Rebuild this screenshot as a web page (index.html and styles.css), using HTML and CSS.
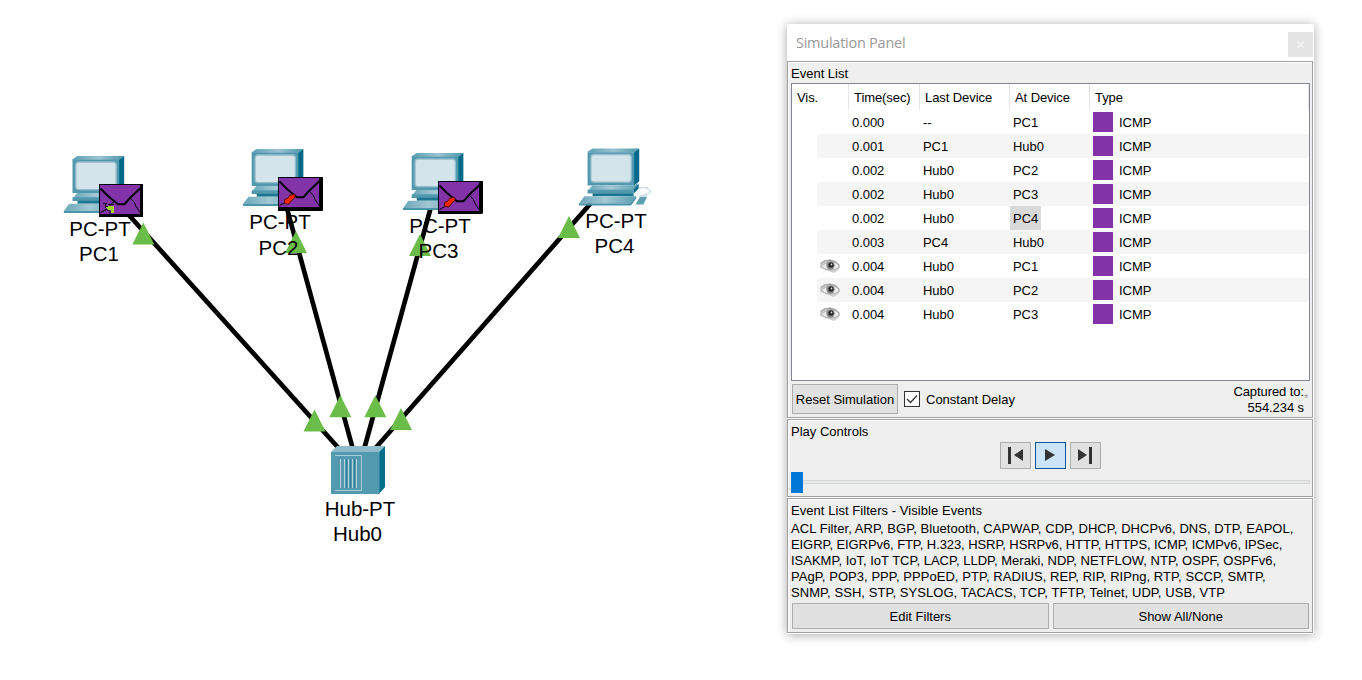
FILE: index.html
```html
<!DOCTYPE html>
<html lang="en">
<head>
<meta charset="utf-8">
<title>Simulation Panel</title>
<link rel="stylesheet" href="styles.css">
</head>
<body>
<main class="app">
<svg class="canvas" width="780" height="680" viewBox="0 0 780 680">
  <defs>
    <linearGradient id="lid" x1="0" x2="1"><stop offset="0" stop-color="#5c9fb3"/><stop offset=".5" stop-color="#9cc3d0"/><stop offset="1" stop-color="#4f97ac"/></linearGradient>
    <linearGradient id="deck" x1="0" x2="1"><stop offset="0" stop-color="#6aa7b9"/><stop offset=".45" stop-color="#a3c8d4"/><stop offset="1" stop-color="#5b9fb3"/></linearGradient>
    <g id="pc" transform="scale(.3333)">
      <path d="M0 10L15 0H155L140 12H0Z" fill="url(#lid)"/>
      <path d="M139 12L155 0V98L139 112Z" fill="#00698a"/>
      <path d="M0 11H140V111H0Z" fill="#5299b0"/>
      <rect x="10" y="18" width="121" height="83" rx="9" fill="#d3e4eb" stroke="#94bccb" stroke-width="4"/>
      <path d="M14 111H140L150 104V114L138 126H2Z" fill="url(#deck)"/>
      <path d="M138 124L153 106V120L138 136Z" fill="#00698a"/>
      <path d="M0 124H138V135H0Z" fill="#5299b0"/>
      <path d="M15 134H138V143H15Z" fill="#1d7691"/>
      <path d="M-10 143H146L126 166H-26Z" fill="url(#deck)"/>
      <path d="M-26 165H126L146 143V150L130 171H-26Z" fill="#4b94aa"/>
    </g>
    <g id="mail" shape-rendering="crispEdges">
      <path d="M0 0H44V33H0Z" fill="#000"/>
      <path d="M1 1H41V30H1Z" fill="#8133a7"/>
    </g>
    <g id="folds">
      <path d="M1.500 4.500L9 12l6 5 4 3.200h6.500L31 14l10.500-10" fill="none" stroke="#000" stroke-width="1.900"/>
      <path d="M1.500 28.500L8 25l7-8M31 14l4.500 4.500 1.500 4 4 6" fill="none" stroke="#000" stroke-width="1"/>
    </g>
    <g id="red">
      <path d="M6.500 22.500l3-1 2.500-3.500 5-.5v3l-3 2.500-3 4-4.500-.5Z" fill="#fb2600" stroke="#5b0909" stroke-width="1"/>
    </g>
    <path id="up" d="M0 0L11 22H-11Z" fill="#6bbd49"/>
  </defs>

  <g class="link">
    <path d="M127 213L343 453"/>
    <path d="M286 205L354 453"/>
    <path d="M431.500 205L363 453"/>
    <path d="M591 203L372 452"/>
  </g>
  <use href="#up" x="143.300" y="222.500"/>
  <use href="#up" x="296" y="231"/>
  <use href="#up" x="420" y="234"/>
  <use href="#up" x="569" y="216"/>
  <use href="#up" x="314.500" y="409.500"/>
  <use href="#up" x="340.300" y="395.300"/>
  <use href="#up" x="375.300" y="395.300"/>
  <use href="#up" x="401" y="408"/>

  <use href="#pc" x="72.500" y="156"/>
  <use href="#pc" x="251.700" y="149"/>
  <use href="#pc" x="411.700" y="153"/>
  <use href="#pc" x="587.600" y="148.500"/>
  <path d="M638 188.500c2-1 11-2 12 2s-5 4-11 6" fill="none" stroke="#9dc4d0" stroke-width="1" stroke-dasharray="5 1"/>
  <path d="M640 197l7-.5-3.500 8h-8Z" fill="#5d9fb3"/>

  <g class="hub">
    <path d="M331 452L337 446H385L379 452Z" fill="#8fbbca"/>
    <path d="M379 452L385 446V487L379 494Z" fill="#00708a"/>
    <path d="M331 452H379.500V494H331Z" fill="#5399b0"/>
    <path d="M335 455.500H361.500V490.500H335" fill="none" stroke="#a9cdd8"/>
    <path d="M340.500 459V488M344.500 459V488M348.500 459V488M352.500 459V488M356.500 459V488" stroke="#b5d3dd"/>
    <path d="M346.500 459V488M350.500 459V488M354.500 459V488" stroke="#2f819b"/>
  </g>

  <g class="label">
    <text x="100" y="236">PC-PT</text><text x="99" y="261">PC1</text>
    <text x="280" y="229">PC-PT</text><text x="278.500" y="255">PC2</text>
    <text x="440" y="233">PC-PT</text><text x="438.500" y="258">PC3</text>
    <text x="616" y="228">PC-PT</text><text x="614.500" y="253">PC4</text>
    <text x="360" y="516">Hub-PT</text><text x="357.500" y="541">Hub0</text>
  </g>

  <use href="#mail" x="99" y="184"/><use href="#folds" x="99" y="184"/>
  <path d="M106 206h8v7h-3v-3h-3l-2-2Z" fill="#a8d52b" shape-rendering="crispEdges"/>
  <path d="M103 203.500h4M105 206.500h3M108 204.500h6M105.500 203v5M103 211.500l3-2M107 210l3 1v4" fill="none" stroke="#111"/>
  <use href="#mail" x="278" y="177"/><path d="M322.500 177V210.500H278" fill="none" stroke="#000"/><use href="#folds" x="278" y="177"/><use href="#red" x="278" y="177"/>
  <use href="#mail" x="438" y="181"/><path d="M482.500 181V213.500" stroke="#000"/><use href="#folds" x="438" y="181"/><use href="#red" x="438" y="180"/>
</svg>

<section class="panel">
  <header class="title"><span class="title-text">Simulation Panel</span><span class="close"><svg width="9" height="9"><path d="M1.500 1.500l6 6M7.500 1.500l-6 6" stroke="#f4f4f4" stroke-width="1.500"/></svg></span></header>

  <div class="group events">
    <div class="caption">Event List</div>
    <div class="table">
      <div class="row head"><span>Vis.</span><span>Time(sec)</span><span>Last Device</span><span>At Device</span><span>Type</span></div>
      <div class="row"><i></i><span>0.000</span><span>--</span><span>PC1</span><b></b><span>ICMP</span></div>
      <div class="row alt"><i></i><span>0.001</span><span>PC1</span><span>Hub0</span><b></b><span>ICMP</span></div>
      <div class="row"><i></i><span>0.002</span><span>Hub0</span><span>PC2</span><b></b><span>ICMP</span></div>
      <div class="row alt"><i></i><span>0.002</span><span>Hub0</span><span>PC3</span><b></b><span>ICMP</span></div>
      <div class="row"><i></i><span>0.002</span><span>Hub0</span><em>PC4</em><b></b><span>ICMP</span></div>
      <div class="row alt"><i></i><span>0.003</span><span>PC4</span><span>Hub0</span><b></b><span>ICMP</span></div>
      <div class="row"><i><svg width="20" height="14"><use href="#eye"/></svg></i><span>0.004</span><span>Hub0</span><span>PC1</span><b></b><span>ICMP</span></div>
      <div class="row alt"><i><svg width="20" height="14"><use href="#eye"/></svg></i><span>0.004</span><span>Hub0</span><span>PC2</span><b></b><span>ICMP</span></div>
      <div class="row"><i><svg width="20" height="14"><g id="eye">
        <path d="M0 4L4 1 10 0 15 1.500 20 6V9L17 12 14 14 8 12 3 10 0 9Z" fill="#cfcfcf"/>
        <path d="M1 7Q6 3 12 3T19 8Q16 11.500 10 11T1 7Z" fill="#eee" stroke="#a5a5a5" stroke-width=".8"/>
        <path d="M1 4.500Q5 1 11 1.500T19 6" fill="none" stroke="#999" stroke-width=".9"/>
        <circle cx="10.500" cy="6.500" r="4.200" fill="#888"/><circle cx="11" cy="6" r="2.600" fill="#222"/><circle cx="11.500" cy="5.500" r=".9" fill="#ddd"/>
        </g></svg></i><span>0.004</span><span>Hub0</span><span>PC3</span><b></b><span>ICMP</span></div>
    </div>
    <div class="below">
      <button class="btn reset">Reset Simulation</button>
      <span class="check"><svg width="14" height="14"><path d="M2 7l3.500 3.500L12 3.500" fill="none" stroke="#333" stroke-width="1.300"/></svg></span>
      <span class="delay">Constant Delay</span>
      <span class="captured">Captured to:<br>554.234 s</span><span class="star">*</span>
    </div>
  </div>

  <div class="group play">
    <div class="caption">Play Controls</div>
    <div class="controls">
      <button class="btn"><svg width="29" height="25"><path d="M7 4h3v17H7zM22 6v12l-9-6z" fill="#333"/></svg></button>
      <button class="btn on"><svg width="29" height="25"><path d="M9 6v12l10-6z" fill="#333"/></svg></button>
      <button class="btn"><svg width="29" height="25"><path d="M7 6v12l9-6zM18 4h3v17h-3z" fill="#333"/></svg></button>
    </div>
    <div class="slider"><span class="thumb"></span><span class="track"></span></div>
  </div>

  <div class="group filters">
    <div class="caption">Event List Filters - Visible Events</div>
    <div class="list">
      <p class="wide">ACL Filter, ARP, BGP, Bluetooth, CAPWAP, CDP, DHCP, DHCPv6, DNS, DTP, EAPOL,</p>
      <p class="tight">EIGRP, EIGRPv6, FTP, H.323, HSRP, HSRPv6, HTTP, HTTPS, ICMP, ICMPv6, IPSec,</p>
      <p>ISAKMP, IoT, IoT TCP, LACP, LLDP, Meraki, NDP, NETFLOW, NTP, OSPF, OSPFv6,</p>
      <p class="wide">PAgP, POP3, PPP, PPPoED, PTP, RADIUS, REP, RIP, RIPng, RTP, SCCP, SMTP,</p>
      <p class="wide">SNMP, SSH, STP, SYSLOG, TACACS, TCP, TFTP, Telnet, UDP, USB, VTP</p>
    </div>
    <div class="actions"><button class="btn">Edit Filters</button><button class="btn">Show All/None</button></div>
  </div>
</section>
</main>
</body>
</html>
```
FILE: styles.css
```css
* { box-sizing: border-box; }
body { margin: 0; background: #fff; color: #000; font: 13px/16px "Liberation Sans", Arial, sans-serif; }
.app { display: flex; width: 1362px; height: 680px; overflow: hidden; }
.canvas { flex: none; display: block; }
.link { stroke: #000; stroke-width: 4.7; }
.label { font-size: 20.5px; text-anchor: middle; }

.panel { width: 527px; height: 610px; margin: 24px 0 0 7px; background: #fff; box-shadow: 0 1px 10px rgba(0,0,0,.34); display: flex; flex-direction: column; gap: 1px; }
.title { height: 36px; display: flex; justify-content: space-between; padding: 8px 1px 0 9px; }
.title-text { font: 14.5px/22px "Open Sans", "Noto Sans", sans-serif; letter-spacing: -.25px; color: #999; }
.close { width: 25px; height: 25px; background: #e5e5e5; display: flex; align-items: center; justify-content: center; }

.group { width: 526px; border: 1px solid #a0a0a0; background: #efefef; padding: 0 3px; box-shadow: inset 1px 1px #fff; }
.events { height: 357px; }
.play { height: 78px; }
.filters { height: 135px; }
.caption { height: 21px; padding-top: 4px; }

.table { width: 519px; height: 298px; border: 1px solid #828790; background: #fff; }
.row { display: grid; grid-template-columns: 35px 71px 90px 80px 26px 1fr; height: 24px; margin-left: 25px; align-items: center; }
.row.alt { background: #f5f5f5; }
.row > span { padding-top: 1px; letter-spacing: -.05px; }
.row i { padding-left: 3px; display: flex; }
.row b { width: 20px; height: 20px; background: #8133a7; }
.row em { font-style: normal; background: #d9d9d9; justify-self: start; height: 24px; line-height: 25px; margin-left: -3px; padding: 0 3px; }
.row.head { grid-template-columns: 57px 71px 90px 80px 1fr; height: 26px; margin: 0; align-items: stretch; }
.row.head > span { border-right: 1px solid #e5e5e5; padding: 6px 0 0 5px; letter-spacing: -.08px; }

.btn { font: inherit; color: inherit; background: #e1e1e1; border: 1px solid #adadad; padding: 1px 0 0; }
.below { display: flex; padding: 3px 0 0 1px; height: 34px; }
.reset { width: 106px; height: 30px; }
.check { width: 16px; height: 16px; border: 1px solid #333; background: #fff; margin: 7px 0 0 6px; display: flex; }
.delay { margin: 8px 0 0 6px; }
.captured { margin-left: auto; text-align: right; letter-spacing: -.08px; }
.star { color: #999; font-size: 11px; margin-top: 6px; width: 5px; }

.play .caption { height: 22px; }
.controls { display: flex; gap: 4px; padding-left: 209px; }
.controls .btn { width: 31px; height: 27px; display: flex; padding: 0; }
.controls .on { background: #cce4f7; border-color: #005499; }
.slider { display: flex; align-items: center; height: 21px; margin-top: 3px; }
.thumb { width: 12px; height: 21px; background: #0078d7; }
.track { flex: 1; height: 4px; border: 1px solid #d6d6d6; border-left: 0; background: #e7eaea; margin: 0 -1px 1px 0; }

.filters .caption, .filters .wide { letter-spacing: .055px; }
.filters .tight { letter-spacing: -.08px; }
.list { height: 83px; padding-top: 1px; }
.list p { margin: 0; white-space: nowrap; }
.actions { display: flex; gap: 4px; padding-left: 1px; }
.actions .btn { width: 257px; height: 26px; }
```
